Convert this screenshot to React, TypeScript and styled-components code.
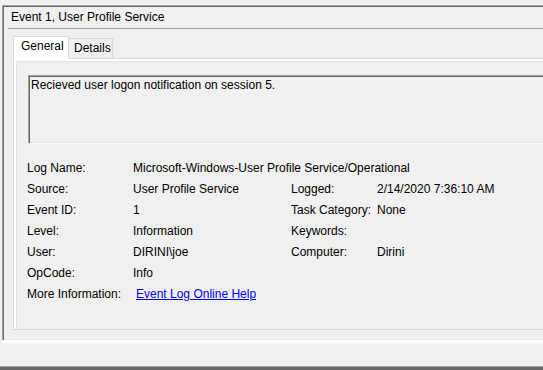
import React from "react"
import styled, { createGlobalStyle } from "styled-components"

type Field = {
   label: string,
   value?: string,
   label2?: string,
   value2?: string,
   wide?: boolean
}

const fields: Field[] = [
   { label: "Log Name:", value: "Microsoft-Windows-User Profile Service/Operational", wide: true },
   { label: "Source:", value: "User Profile Service", label2: "Logged:", value2: "2/14/2020 7:36:10 AM" },
   { label: "Event ID:", value: "1", label2: "Task Category:", value2: "None" },
   { label: "Level:", value: "Information", label2: "Keywords:", value2: "" },
   { label: "User:", value: "DIRINI\\joe", label2: "Computer:", value2: "Dirini" },
   { label: "OpCode:", value: "Info" },
]

export default function App() {
   return (
      <>
         <GlobalStyle />
         <Screen>
            <Frame>
               <Title>Event 1, User Profile Service</Title>
               <TabArea>
                  <TabStrip>
                     <Tab $active $width={56}>General</Tab>
                     <Tab $width={44}>Details</Tab>
                  </TabStrip>
                  <TabPanel>
                     <MessageBox>Recieved user logon notification on session 5.</MessageBox>
                     <FieldGrid>
                        {fields.map((f) => (
                           <React.Fragment key={f.label}>
                              <Label>{f.label}</Label>
                              <Value $wide={f.wide}>{f.value}</Value>
                              {!f.wide && <Label>{f.label2}</Label>}
                              {!f.wide && <Value>{f.value2}</Value>}
                           </React.Fragment>
                        ))}
                        <Label>More Information:</Label>
                        <Value $wide>
                           <HelpLink href="#">Event Log Online Help</HelpLink>
                        </Value>
                     </FieldGrid>
                  </TabPanel>
               </TabArea>
            </Frame>
            <BottomBar />
         </Screen>
      </>
   );
}

const GlobalStyle = createGlobalStyle`
   *, *::before, *::after {
      box-sizing: border-box;
   }
   html, body {
      margin: 0;
      padding: 0;
      background: #f0f0f0;
      overflow: hidden;
   }
   body {
      font-family: "Segoe UI", "Liberation Sans", Arial, sans-serif;
      font-size: 12px;
      color: #000;
   }
`

const Screen = styled.div`
   height: 370px;
   display: flex;
   flex-direction: column;
   justify-content: space-between;
   overflow: hidden;
`

// sunken pane: dark top/left, light bottom
const Frame = styled.div`
   margin: 5px 0 0 2px;
   width: 580px;
   border-top: 1px solid #a0a0a0;
   border-left: 1px solid #a0a0a0;
   border-bottom: 1px solid #fff;
   box-shadow: inset 1px 1px 0 #696969, inset 0 -1px 0 #e3e3e3, 0 2px 0 #fff;
   padding: 1px 0 10px 1px;
`

const Title = styled.div`
   margin-left: 4px;
   padding-left: 3px;
   height: 22px;
   line-height: 21px;
   border-bottom: 1px solid #a0a0a0;
`

const TabArea = styled.div`
   padding: 7px 0 0 9px;
`

const TabStrip = styled.div`
   display: flex;
   align-items: flex-end;
   position: relative;
   z-index: 1;
   margin-bottom: -1px;
`

const Tab = styled.div<{ $active?: boolean, $width: number }>`
   width: ${({ $width }) => $width}px;
   white-space: nowrap;
   overflow: hidden;
   border-top: 1px solid #d9d9d9;
   border-right: 1px solid #d9d9d9;
   border-left: ${({ $active }) => ($active ? "1px solid #d9d9d9" : "none")};
   border-bottom: ${({ $active }) => ($active ? "1px solid #fff" : "none")};
   background: ${({ $active }) => ($active ? "#fff" : "#f0f0f0")};
   height: ${({ $active }) => ($active ? "23px" : "20px")};
   line-height: 19px;
   padding: ${({ $active }) => ($active ? "0 0 2px 7px" : "0 0 0 5px")};
   margin-bottom: ${({ $active }) => ($active ? "0" : "1px")};
`

const TabPanel = styled.div`
   height: 272px;
   border: 1px solid #d9d9d9;
   box-shadow: inset 2px 2px 0 #fff, inset 3px 3px 0 #e3e3e3;
   padding: 16px 0 0 13px;
`

const MessageBox = styled.div`
   margin-left: 1px;
   height: 69px;
   border-top: 1px solid #a0a0a0;
   border-left: 1px solid #a0a0a0;
   border-bottom: 1px solid #fff;
   box-shadow: inset 1px 1px 0 #696969, inset 0 -1px 0 #e3e3e3;
   padding: 1px 0 0 2px;
   line-height: 16px;
`

const FieldGrid = styled.div`
   margin-top: 14px;
   display: grid;
   grid-template-columns: 106px 158px 86px 1fr;
   grid-auto-rows: 21px;
   line-height: 21px;
`

const Label = styled.span`
   white-space: nowrap;
`

const Value = styled.span<{ $wide?: boolean }>`
   white-space: nowrap;
   grid-column: ${({ $wide }) => ($wide ? "span 3" : "auto")};
`

const HelpLink = styled.a`
   margin-left: 3px;
   color: #0000ff;
   text-decoration: underline;
`

const BottomBar = styled.div`
   height: 4px;
   border-top: 1px solid #a0a0a0;
   background: #696969;
`
